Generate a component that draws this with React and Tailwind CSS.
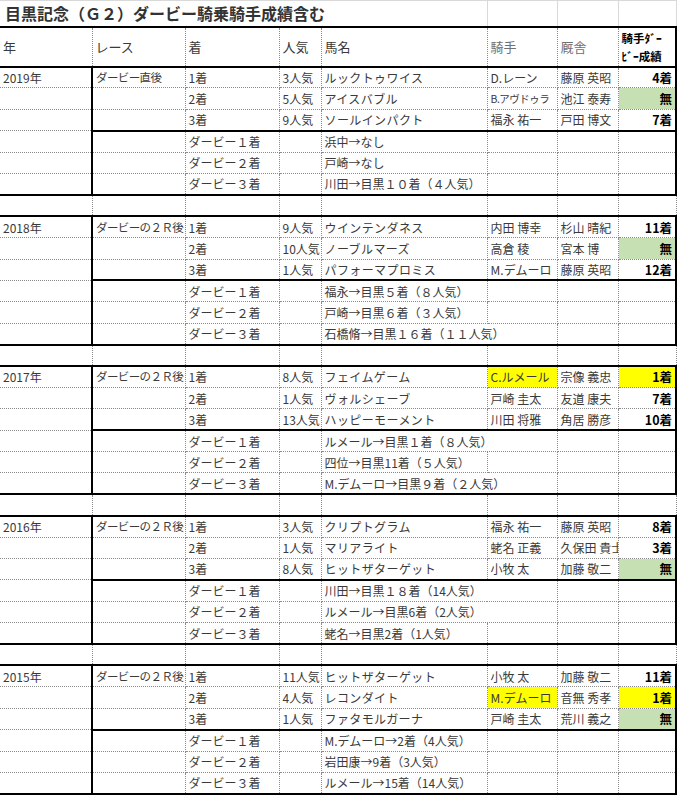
import React from "react";
import clsx from "clsx";

// thick lines win over the dotted grid in border-collapse
const T = "[border-top:2px_solid_#000]!";
const B = "[border-bottom:2px_solid_#000]!";
const R = "[border-right:2px_solid_#000]!";
const L0 = "[border-left:none]!";

const groups = [
  {
    year: "2019年",
    race: "ダービー直後",
    top: [
      { pos: "1着", pop: "3人気", horse: "ルックトゥワイス", jockey: "D.レーン", trainer: "藤原 英昭", res: "4着" },
      { pos: "2着", pop: "5人気", horse: "アイスバブル", jockey: "B.アヴドゥラ", trainer: "池江 泰寿", res: "無", green: true, small: true },
      { pos: "3着", pop: "9人気", horse: "ソールインパクト", jockey: "福永 祐一", trainer: "戸田 博文", res: "7着" },
    ],
    derby: [
      { text: "浜中→なし" },
      { text: "戸崎→なし" },
      { text: "川田→目黒１０着（４人気）" },
    ],
  },
  {
    year: "2018年",
    race: "ダービーの２Ｒ後",
    top: [
      { pos: "1着", pop: "9人気", horse: "ウインテンダネス", jockey: "内田 博幸", trainer: "杉山 晴紀", res: "11着" },
      { pos: "2着", pop: "10人気", horse: "ノーブルマーズ", jockey: "高倉 稜", trainer: "宮本 博", res: "無", green: true },
      { pos: "3着", pop: "1人気", horse: "パフォーマプロミス", jockey: "M.デムーロ", trainer: "藤原 英昭", res: "12着" },
    ],
    derby: [
      { text: "福永→目黒５着（８人気）" },
      { text: "戸崎→目黒６着（３人気）" },
      { text: "石橋脩→目黒１６着（１１人気）", span: true },
    ],
  },
  {
    year: "2017年",
    race: "ダービーの２Ｒ後",
    top: [
      { pos: "1着", pop: "8人気", horse: "フェイムゲーム", jockey: "C.ルメール", trainer: "宗像 義忠", res: "1着", yellowJ: true, yellowR: true },
      { pos: "2着", pop: "1人気", horse: "ヴォルシェーブ", jockey: "戸崎 圭太", trainer: "友道 康夫", res: "7着" },
      { pos: "3着", pop: "13人気", horse: "ハッピーモーメント", jockey: "川田 将雅", trainer: "角居 勝彦", res: "10着" },
    ],
    derby: [
      { text: "ルメール→目黒１着（８人気）", span: true },
      { text: "四位→目黒11着（５人気）" },
      { text: "M.デムーロ→目黒９着（２人気）", span: true },
    ],
  },
  {
    year: "2016年",
    race: "ダービーの２Ｒ後",
    top: [
      { pos: "1着", pop: "3人気", horse: "クリプトグラム", jockey: "福永 祐一", trainer: "藤原 英昭", res: "8着" },
      { pos: "2着", pop: "1人気", horse: "マリアライト", jockey: "蛯名 正義", trainer: "久保田 貴士", res: "3着" },
      { pos: "3着", pop: "8人気", horse: "ヒットザターゲット", jockey: "小牧 太", trainer: "加藤 敬二", res: "無", green: true },
    ],
    derby: [
      { text: "川田→目黒１８着（14人気）", span: true },
      { text: "ルメール→目黒6着（2人気）", span: true },
      { text: "蛯名→目黒2着（1人気）" },
    ],
  },
  {
    year: "2015年",
    race: "ダービーの２Ｒ後",
    top: [
      { pos: "1着", pop: "11人気", horse: "ヒットザターゲット", jockey: "小牧 太", trainer: "加藤 敬二", res: "11着" },
      { pos: "2着", pop: "4人気", horse: "レコンダイト", jockey: "M.デムーロ", trainer: "音無 秀孝", res: "1着", yellowJ: true, yellowR: true },
      { pos: "3着", pop: "1人気", horse: "ファタモルガーナ", jockey: "戸崎 圭太", trainer: "荒川 義之", res: "無", green: true },
    ],
    derby: [
      { text: "M.デムーロ→2着（4人気）" },
      { text: "岩田康→9着（3人気）" },
      { text: "ルメール→15着（14人気）" },
    ],
  },
];

const derbyLabels = ["ダービー１着", "ダービー２着", "ダービー３着"];

function Td({ className, children, ...rest }) {
  return (
    <td
      className={clsx(
        "border border-dotted border-[#8c8c8c] px-[3px] whitespace-nowrap overflow-hidden",
        className
      )}
      {...rest}
    >
      {children}
    </td>
  );
}

function EmptyRow() {
  return (
    <tr className="h-[21.4px]">
      <Td className={L0} />
      <Td />
      <Td />
      <Td />
      <Td />
      <Td />
      <Td />
      <Td />
    </tr>
  );
}

function Group({ g }) {
  return (
    <>
      {g.top.map((r, i) => (
        <tr key={r.pos} className="h-[21.4px]">
          <Td className={clsx(L0, R, i === 0 && T)}>{i === 0 ? g.year : ""}</Td>
          <Td className={clsx("text-[11.5px] tracking-[-0.6px]", i === 0 && T)}>{i === 0 ? g.race : ""}</Td>
          <Td className={clsx(i === 0 && T)}>{r.pos}</Td>
          <Td className={clsx("px-[1px]", i === 0 && T)}>{r.pop}</Td>
          <Td className={clsx("tracking-[0.4px]", i === 0 && T)}>{r.horse}</Td>
          <Td className={clsx(i === 0 && T, r.yellowJ && "bg-[#ffff00]", r.small && "text-[10.5px] tracking-[-0.5px]")}>
            {r.jockey}
          </Td>
          <Td className={clsx("px-[2px]", i === 0 && T)}>{r.trainer}</Td>
          <Td
            className={clsx(
              R,
              "text-right font-bold text-black text-[12.5px] px-[2px]",
              i === 0 && T,
              r.green && "bg-[#c6e0b4]",
              r.yellowR && "bg-[#ffff00]"
            )}
          >
            {r.res}
          </Td>
        </tr>
      ))}
      {g.derby.map((d, j) => (
        <tr key={j} className="h-[21.4px]">
          <Td className={clsx(L0, R, j === 2 && B)} />
          <Td className={clsx(j === 0 && T, j === 2 && B)} />
          <Td className={clsx(j === 0 && T, j === 2 && B)}>{derbyLabels[j]}</Td>
          <Td className={clsx(j === 0 && T, j === 2 && B)} />
          {d.span ? (
            <Td colSpan={2} className={clsx(j === 0 && T, j === 2 && B)}>{d.text}</Td>
          ) : (
            <>
              <Td className={clsx(j === 0 && T, j === 2 && B)}>{d.text}</Td>
              <Td className={clsx(j === 0 && T, j === 2 && B)} />
            </>
          )}
          <Td className={clsx(j === 0 && T, j === 2 && B)} />
          <Td className={clsx(R, j === 0 && T, j === 2 && B)} />
        </tr>
      ))}
    </>
  );
}

export default function App() {
  return (
    <div className="w-[679px] h-[796px] bg-white overflow-hidden font-['Noto_Sans_CJK_JP','Noto_Sans_CJK_SC',sans-serif] text-[12px] leading-[15px] text-[#3a3a3a]">
      <table className="table-fixed border-collapse w-[676px]">
        <colgroup>
          <col className="w-[92px]" />
          <col className="w-[93px]" />
          <col className="w-[94px]" />
          <col className="w-[42px]" />
          <col className="w-[166px]" />
          <col className="w-[70px]" />
          <col className="w-[61px]" />
          <col className="w-[58px]" />
        </colgroup>
        <tbody>
          <tr className="h-[26px]">
            <td colSpan={5} className="border border-solid border-[#d9d9d9] border-l-0 px-[5px] whitespace-nowrap overflow-visible text-[16px] leading-[20px] font-bold text-[#333]">
              目黒記念（Ｇ２）ダービー騎乗騎手成績含む
            </td>
            <td className="border border-solid border-[#d9d9d9]" />
            <td className="border border-solid border-[#d9d9d9]" />
            <td className="border border-solid border-[#d9d9d9]" />
          </tr>
          <tr className="h-[40px]">
            <Td className={clsx(L0, T, B, "text-[13px]")}>年</Td>
            <Td className={clsx(T, B, "text-[13px]")}>レース</Td>
            <Td className={clsx(T, B, "text-[13px]")}>着</Td>
            <Td className={clsx(T, B, "text-[13px]")}>人気</Td>
            <Td className={clsx(T, B, "text-[13px]")}>馬名</Td>
            <Td className={clsx(T, B, "text-[13px] text-[#707070]")}>騎手</Td>
            <Td className={clsx(T, B, "text-[13px] text-[#707070]")}>厩舎</Td>
            <Td className={clsx(T, B, R, "text-[11.5px] font-bold text-black leading-[18px] whitespace-normal")}>
              騎手ﾀﾞｰ
              <br />
              ﾋﾞｰ成績
            </Td>
          </tr>
          {groups.map((g, k) => (
            <React.Fragment key={g.year}>
              {k > 0 && <EmptyRow />}
              <Group g={g} />
            </React.Fragment>
          ))}
        </tbody>
      </table>
    </div>
  );
}
